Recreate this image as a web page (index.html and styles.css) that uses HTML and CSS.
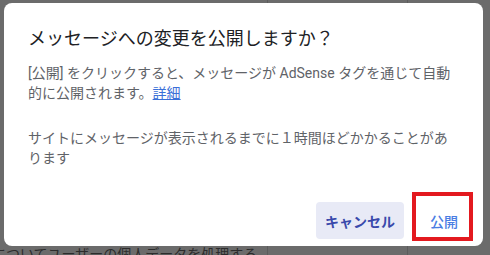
FILE: index.html
```html
<!DOCTYPE html>
<html lang="ja">
<head>
<meta charset="utf-8">
<title>公開の確認</title>
<link rel="stylesheet" href="styles.css">
</head>
<body>
<div class="page">
  <div class="page-col first"><span class="page-text">についてユーザーの個人データを処理する</span></div>
  <div class="page-col"></div>
  <div class="page-col last"></div>
</div>
<div class="dialog" role="dialog">
  <div class="content">
    <h1 class="title">メッセージへの変更を公開しますか？</h1>
    <p class="para">[公開] をクリックすると、メッセージが AdSense タグを通じて自動的に公開されます。<a class="link" href="#">詳細</a></p>
    <p class="para gap">サイトにメッセージが表示されるまでに１時間ほどかかることがあります</p>
  </div>
  <div class="actions">
    <button class="btn cancel">キャンセル</button>
    <span class="mark"><button class="btn publish">公開</button></span>
  </div>
</div>
</body>
</html>
```
FILE: styles.css
```css
html, body {
  margin: 0;
  padding: 0;
}
body {
  width: 490px;
  height: 255px;
  overflow: hidden;
  background: #6b6b6b;
  font-family: Roboto, "Noto Sans CJK JP", sans-serif;
  position: relative;
}
.page {
  display: grid;
  grid-template-columns: 268px 140px 1fr;
  height: 255px;
}
.page-col {
  border-right: 1px solid #5c5c5c;
  display: flex;
  align-items: flex-end;
}
.page-col.last { border-right: none; }
.page-text {
  font-size: 14px;
  line-height: 14px;
  color: #2c2c2c;
  margin-left: -8px;
  margin-bottom: -6px;
  white-space: nowrap;
}
.dialog {
  position: absolute;
  top: 3px;
  left: 4px;
  width: 479px;
  height: 243px;
  box-sizing: border-box;
  background: #fff;
  border-radius: 8px;
  padding: 24px 10px 7px 24px;
  display: flex;
  flex-direction: column;
}
.content {
  padding-right: 14px;
}
.title {
  margin: 0 0 12px 0;
  font-size: 18px;
  line-height: 24px;
  font-weight: 400;
  color: #202124;
}
.para {
  margin: 0;
  font-size: 14px;
  line-height: 20px;
  color: #5f6368;
}
.para.gap {
  margin-top: 25px;
}
.link {
  color: #3a6fd8;
  text-decoration: underline;
}
.actions {
  margin-top: auto;
  display: flex;
  justify-content: flex-end;
  align-items: flex-end;
  gap: 11px;
}
.btn {
  font-family: Roboto, "Noto Sans CJK JP", sans-serif;
  font-size: 14px;
  height: 37px;
  border: none;
  border-radius: 4px;
  padding: 0 9px;
  white-space: nowrap;
  cursor: pointer;
}
.cancel {
  background: #e8eaf6;
  color: #3949ab;
  font-weight: 700;
}
.mark {
  position: relative;
  display: flex;
}
.publish {
  background: transparent;
  color: #4a7de3;
  font-weight: 500;
  width: 58px;
}
.mark::after {
  content: "";
  position: absolute;
  top: -10px;
  bottom: -2px;
  left: -3px;
  right: 0;
  border: 4px solid #e3191f;
  pointer-events: none;
}
```
